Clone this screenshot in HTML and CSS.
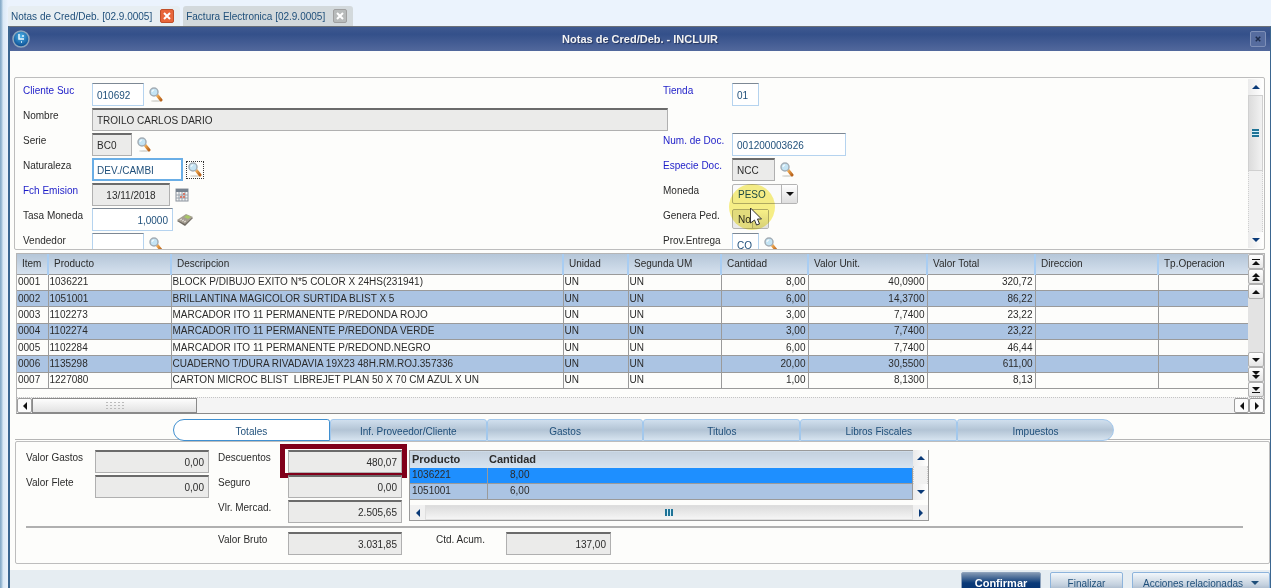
FILE: index.html
```html
<!DOCTYPE html>
<html lang="es">
<head>
    <meta charset="UTF-8">
    <meta name="viewport" content="width=device-width, initial-scale=1.0">
    <title>Notas de Cred/Deb.</title>
    <link rel="stylesheet" href="styles.css">
</head>
<body>
    <svg class="symbols" aria-hidden="true">
        <defs>
            <linearGradient id="handle" x1="0" y1="0" x2="1" y2="1">
                <stop offset="0" stop-color="#f6b25a"/>
                <stop offset="1" stop-color="#b9641c"/>
            </linearGradient>
            <radialGradient id="ball" cx="50%" cy="35%" r="60%">
                <stop offset="0" stop-color="#4fb4ea"/>
                <stop offset="1" stop-color="#0b4f94"/>
            </radialGradient>
        </defs>
        <symbol id="icon-search" viewBox="0 0 14 16">
            <ellipse cx="7" cy="14" rx="5" ry="1" fill="#dcdcd8"/>
            <path d="M8 8l4 5" stroke="url(#handle)" stroke-width="3" stroke-linecap="round"/>
            <circle cx="5" cy="5" r="4" fill="#c4e4f4" stroke="#a3adb5" stroke-width="1.5"/>
            <path d="M3 5a2 2 0 0 1 2-2" stroke="#fff" fill="none"/>
        </symbol>
        <symbol id="icon-up" viewBox="0 0 8 8"><path d="M4 2l4 4H0z"/></symbol>
        <symbol id="icon-down" viewBox="0 0 8 8"><path d="M4 6l4-4H0z"/></symbol>
        <symbol id="icon-left" viewBox="0 0 8 8"><path d="M2 4l4-4v8z"/></symbol>
        <symbol id="icon-right" viewBox="0 0 8 8"><path d="M6 4L2 0v8z"/></symbol>
        <symbol id="icon-first" viewBox="0 0 8 8"><path d="M0 1h8v1H0zM4 3l4 4H0z"/></symbol>
        <symbol id="icon-last" viewBox="0 0 8 8"><path d="M0 6h8v1H0zM4 5l4-4H0z"/></symbol>
        <symbol id="icon-pageup" viewBox="0 0 8 8"><path d="M4 0l4 4H0zM4 4l4 4H0z"/></symbol>
        <symbol id="icon-pagedown" viewBox="0 0 8 8"><path d="M4 4l4-4H0zM4 8l4-4H0z"/></symbol>
        <symbol id="icon-close" viewBox="0 0 8 8"><path d="M1 1l6 6M7 1L1 7" stroke="currentColor" stroke-width="2"/></symbol>
    </svg>

    <nav class="app-tabs">
        <div class="app-tab active">
            <a href="#">Notas de Cred/Deb. [02.9.0005]</a>
            <button class="tab-close" aria-label="Cerrar"><svg><use href="#icon-close"/></svg></button>
        </div>
        <div class="app-tab">
            <a href="#">Factura Electronica [02.9.0005]</a>
            <button class="tab-close" aria-label="Cerrar"><svg><use href="#icon-close"/></svg></button>
        </div>
    </nav>

    <main class="window">
        <header class="titlebar">
            <svg class="logo" viewBox="0 0 18 18">
                <circle cx="9" cy="9" r="8" fill="url(#ball)" stroke="#8fa6bd" stroke-width="1.5"/>
                <path d="M7 4v5h5M10 6h2M9 12h1" stroke="#e8f6ff" stroke-width="1.5" fill="none"/>
            </svg>
            <h1>Notas de Cred/Deb. - INCLUIR</h1>
            <button class="win-close" aria-label="Cerrar"><svg><use href="#icon-close"/></svg></button>
        </header>

        <section class="form-panel">
            <form class="form-grid">
                <div class="field">
                    <label class="required" for="cliente">Cliente Suc</label>
                    <input class="w52" id="cliente" value="010692">
                    <button type="button" class="lookup" aria-label="Buscar"><svg><use href="#icon-search"/></svg></button>
                </div>
                <div class="field">
                    <label class="required" for="tienda">Tienda</label>
                    <input class="w27" id="tienda" value="01">
                </div>
                <div class="field wide">
                    <label for="nombre">Nombre</label>
                    <input class="w576" id="nombre" value="TROILO CARLOS DARIO" readonly>
                </div>
                <div class="field">
                    <label for="serie">Serie</label>
                    <input class="w40" id="serie" value="BC0" readonly>
                    <button type="button" class="lookup" aria-label="Buscar"><svg><use href="#icon-search"/></svg></button>
                </div>
                <div class="field">
                    <label class="required" for="numdoc">Num. de Doc.</label>
                    <input class="w114" id="numdoc" value="001200003626">
                </div>
                <div class="field">
                    <label for="naturaleza">Naturaleza</label>
                    <input class="w91 current" id="naturaleza" value="DEV./CAMBI">
                    <button type="button" class="lookup focused" aria-label="Buscar"><svg><use href="#icon-search"/></svg></button>
                </div>
                <div class="field">
                    <label class="required" for="especie">Especie Doc.</label>
                    <input class="w43" id="especie" value="NCC" readonly>
                    <button type="button" class="lookup" aria-label="Buscar"><svg><use href="#icon-search"/></svg></button>
                </div>
                <div class="field">
                    <label class="required" for="emision">Fch Emision</label>
                    <input class="w78 center" id="emision" value="13/11/2018" readonly>
                    <button type="button" class="lookup" aria-label="Calendario">
                        <svg viewBox="0 0 14 14">
                            <rect x="1" y="1" width="12" height="12" fill="#f4f4f4" stroke="#8a929c"/>
                            <rect x="1" y="1" width="12" height="3" fill="#76828f"/>
                            <path d="M4 4v9M7 4v9M10 4v9M1 7h12M1 10h12" stroke="#98a2ac"/>
                            <path d="M5 8h2v2H5zM8 5h2v2H8zM8 8h2v2H8z" fill="#d5796a"/>
                        </svg>
                    </button>
                </div>
                <div class="field">
                    <label for="moneda">Moneda</label>
                    <span class="select-box w66">
                        <select id="moneda"><option>PESO</option></select>
                        <span class="arrow"><svg><use href="#icon-down"/></svg></span>
                    </span>
                </div>
                <div class="field">
                    <label for="tasa">Tasa Moneda</label>
                    <input class="w81 number" id="tasa" value="1,0000">
                    <button type="button" class="lookup" aria-label="Calculadora">
                        <svg class="calc" viewBox="0 0 18 14">
                            <path d="M1 8l9-6 7 3-8 8z" fill="#6f6a62"/>
                            <path d="M1 7l9-6 7 3-8 7z" fill="#a59e92"/>
                            <path d="M8 4l3-2 4 2-3 2z" fill="#a8c765"/>
                            <path d="M4 7l2-1M6 8l2-1M8 9l2-1" stroke="#e6e2da"/>
                        </svg>
                    </button>
                </div>
                <div class="field">
                    <label for="genera">Genera Ped.</label>
                    <span class="select-box locked w37">
                        <select id="genera"><option>No</option></select>
                        <span class="arrow"></span>
                    </span>
                </div>
                <div class="field">
                    <label for="vendedor">Vendedor</label>
                    <input class="w52" id="vendedor">
                    <button type="button" class="lookup" aria-label="Buscar"><svg><use href="#icon-search"/></svg></button>
                </div>
                <div class="field">
                    <label for="entrega">Prov.Entrega</label>
                    <input class="w27" id="entrega" value="CO">
                    <button type="button" class="lookup" aria-label="Buscar"><svg><use href="#icon-search"/></svg></button>
                    <span class="pointer">
                        <svg viewBox="0 0 12 20"><path d="M1 1v15l4-3 2 5 3-1-2-5h4z" fill="#fff" stroke="#333"/></svg>
                    </span>
                </div>
            </form>
            <div class="vscroll">
                <button aria-label="Subir"><svg><use href="#icon-up"/></svg></button>
                <div class="thumb"><i></i></div>
                <div class="track"></div>
                <button aria-label="Bajar"><svg><use href="#icon-down"/></svg></button>
            </div>
        </section>

        <section class="items">
            <div class="items-main">
                <table class="items-table">
                    <colgroup>
                        <col class="c-item"><col class="c-prod"><col class="c-desc"><col class="c-unit"><col class="c-seg">
                        <col class="c-cant"><col class="c-vunit"><col class="c-total"><col class="c-dir"><col>
                    </colgroup>
                    <thead>
                        <tr><th>Item</th><th>Producto</th><th>Descripcion</th><th>Unidad</th><th>Segunda UM</th><th>Cantidad</th><th>Valor Unit.</th><th>Valor Total</th><th>Direccion</th><th>Tp.Operacion</th></tr>
                    </thead>
                    <tbody>
                        <tr><td>0001</td><td>1036221</td><td>BLOCK P/DIBUJO EXITO N*5 COLOR X 24HS(231941)</td><td>UN</td><td>UN</td><td class="num">8,00</td><td class="num">40,0900</td><td class="num">320,72</td><td></td><td></td></tr>
                        <tr><td>0002</td><td>1051001</td><td>BRILLANTINA MAGICOLOR SURTIDA BLIST X 5</td><td>UN</td><td>UN</td><td class="num">6,00</td><td class="num">14,3700</td><td class="num">86,22</td><td></td><td></td></tr>
                        <tr><td>0003</td><td>1102273</td><td>MARCADOR ITO 11 PERMANENTE P/REDONDA ROJO</td><td>UN</td><td>UN</td><td class="num">3,00</td><td class="num">7,7400</td><td class="num">23,22</td><td></td><td></td></tr>
                        <tr><td>0004</td><td>1102274</td><td>MARCADOR ITO 11 PERMANENTE P/REDONDA VERDE</td><td>UN</td><td>UN</td><td class="num">3,00</td><td class="num">7,7400</td><td class="num">23,22</td><td></td><td></td></tr>
                        <tr><td>0005</td><td>1102284</td><td>MARCADOR ITO 11 PERMANENTE P/REDOND.NEGRO</td><td>UN</td><td>UN</td><td class="num">6,00</td><td class="num">7,7400</td><td class="num">46,44</td><td></td><td></td></tr>
                        <tr><td>0006</td><td>1135298</td><td>CUADERNO T/DURA RIVADAVIA 19X23 48H.RM.ROJ.357336</td><td>UN</td><td>UN</td><td class="num">20,00</td><td class="num">30,5500</td><td class="num">611,00</td><td></td><td></td></tr>
                        <tr><td>0007</td><td>1227080</td><td>CARTON MICROC BLIST&nbsp; LIBREJET PLAN 50 X 70 CM AZUL X UN</td><td>UN</td><td>UN</td><td class="num">1,00</td><td class="num">8,1300</td><td class="num">8,13</td><td></td><td></td></tr>
                    </tbody>
                </table>
                <div class="row-nav">
                    <button aria-label="Primero"><svg><use href="#icon-first"/></svg></button>
                    <button aria-label="Pagina anterior"><svg><use href="#icon-pageup"/></svg></button>
                    <button aria-label="Anterior"><svg><use href="#icon-up"/></svg></button>
                    <span class="space"></span>
                    <button aria-label="Siguiente"><svg><use href="#icon-down"/></svg></button>
                    <button aria-label="Pagina siguiente"><svg><use href="#icon-pagedown"/></svg></button>
                    <button aria-label="Ultimo"><svg><use href="#icon-last"/></svg></button>
                </div>
            </div>
            <div class="items-hscroll">
                <button aria-label="Izquierda"><svg><use href="#icon-left"/></svg></button>
                <div class="grip"><i></i></div>
                <span class="space"></span>
                <button aria-label="Izquierda"><svg><use href="#icon-left"/></svg></button>
                <button aria-label="Derecha"><svg><use href="#icon-right"/></svg></button>
            </div>
        </section>

        <nav class="section-tabs">
            <button class="active">Totales</button>
            <button>Inf. Proveedor/Cliente</button>
            <button>Gastos</button>
            <button>Titulos</button>
            <button>Libros Fiscales</button>
            <button>Impuestos</button>
        </nav>

        <section class="totals">
            <div class="totals-top">
                <div class="totals-col first">
                    <div class="field"><label for="gastos">Valor Gastos</label><input class="w114 number" id="gastos" value="0,00" readonly></div>
                    <div class="field"><label for="flete">Valor Flete</label><input class="w114 number" id="flete" value="0,00" readonly></div>
                </div>
                <div class="totals-col second">
                    <div class="field marked"><label for="descuentos">Descuentos</label><input class="w114 number" id="descuentos" value="480,07" readonly></div>
                    <div class="field"><label for="seguro">Seguro</label><input class="w114 number" id="seguro" value="0,00" readonly></div>
                    <div class="field"><label for="mercad">Vlr. Mercad.</label><input class="w114 number" id="mercad" value="2.505,65" readonly></div>
                </div>
                <div class="mini-grid">
                    <div class="mini-main">
                        <table class="mini-table">
                            <colgroup><col class="c-mini"><col></colgroup>
                            <thead><tr><th>Producto</th><th>Cantidad</th></tr></thead>
                            <tbody>
                                <tr class="selected"><td>1036221</td><td><span class="qty">8,00</span></td></tr>
                                <tr><td>1051001</td><td><span class="qty">6,00</span></td></tr>
                            </tbody>
                        </table>
                        <div class="vscroll">
                            <button aria-label="Subir"><svg><use href="#icon-up"/></svg></button>
                            <div class="track"></div>
                            <button aria-label="Bajar"><svg><use href="#icon-down"/></svg></button>
                        </div>
                    </div>
                    <div class="hscroll">
                        <button aria-label="Izquierda"><svg><use href="#icon-left"/></svg></button>
                        <div class="thumb"><i></i></div>
                        <button aria-label="Derecha"><svg><use href="#icon-right"/></svg></button>
                    </div>
                </div>
            </div>
            <div class="totals-bottom">
                <div class="field"><label for="bruto">Valor Bruto</label><input class="w114 number" id="bruto" value="3.031,85" readonly></div>
                <div class="field"><label for="acum">Ctd. Acum.</label><input class="w105 number" id="acum" value="137,00" readonly></div>
            </div>
        </section>

        <footer class="actions">
            <button class="primary">Confirmar</button>
            <button>Finalizar</button>
            <button class="related">Acciones relacionadas <svg><use href="#icon-down"/></svg></button>
        </footer>
    </main>
</body>
</html>
```

FILE: styles.css
```css
:root {
    --text: #2b2b2b;
    --link: #1f4f7a;
    --required: #1c1cc8;
    --row-blue: #abc4e3;
    --line: #9a9a9a;
    --paper: #fdfdfb;
    --navy: #0a3a78;
}

*, *::before, *::after {
    box-sizing: border-box;
}

body {
    margin: 0;
    padding: 6px 0 0 8px;
    height: 100vh;
    overflow: hidden;
    font-family: "Liberation Sans", Arial, sans-serif;
    font-size: 10px;
    color: var(--text);
    background: linear-gradient(to right, #7fa6c5 0, #a9c5dc 2px, #d9e8f5 3px, #ebf3fd 8px);
}

button, input, select {
    font: inherit;
    color: inherit;
    margin: 0;
    padding: 0;
    border-radius: 0;
}

button {
    display: flex;
    align-items: center;
    justify-content: center;
    border: none;
    background: none;
}

svg {
    width: 8px;
    height: 8px;
    flex: none;
    fill: currentColor;
}

.symbols {
    position: absolute;
    width: 0;
    height: 0;
}

.space {
    flex: 1;
}

/* application tabs */
.app-tabs {
    display: flex;
    gap: 3px;
    height: 20px;
}

.app-tab {
    display: flex;
    align-items: center;
    gap: 8px;
    padding: 0 6px 0 3px;
    background: #d3d9dc;
    border-radius: 3px 3px 0 0;
}

.app-tab.active {
    background: #e7eef2;
}

.app-tab a {
    color: var(--link);
    text-decoration: none;
}

.tab-close {
    width: 14px;
    height: 14px;
    border: 1px solid #a0a0a0;
    border-radius: 2px;
    background: #b8bbbb;
    color: #fff;
}

.active .tab-close {
    background: #e8663a;
    border-color: #c04f2a;
}

/* window */
.window {
    display: flex;
    flex-direction: column;
    background: var(--paper);
    border: 1px solid #3b6690;
    border-top-color: #6b7078;
    border-left-width: 2px;
}

.titlebar {
    display: flex;
    align-items: center;
    justify-content: space-between;
    height: 24px;
    padding: 0 4px 0 2px;
    background: linear-gradient(#3f5990, #34508a 30%, #52689c);
}

.titlebar h1 {
    margin: 0;
    font-size: 11px;
    color: #f4f4f4;
    text-shadow: 1px 1px 1px #22335c;
}

.logo {
    width: 18px;
    height: 18px;
}

.win-close {
    width: 16px;
    height: 16px;
    border: 1px solid #7f90b8;
    border-radius: 2px;
    background: #566c9f;
    color: #1e2c4c;
}

.win-close svg {
    width: 6px;
    height: 6px;
}

/* form */
.form-panel {
    display: flex;
    height: 173px;
    margin: 26px 5px 0 4px;
    padding: 1px;
    border: 1px solid #bdbdbd;
    border-radius: 2px;
    overflow: hidden;
}

.form-grid {
    flex: 1;
    display: grid;
    grid-template-columns: 639fr 584fr;
    grid-auto-rows: 25px;
    padding: 4px 0 0 7px;
}

.field {
    display: flex;
    align-items: flex-start;
    position: relative;
}

.field.wide {
    grid-column: span 2;
}

.field label {
    width: 69px;
    flex: none;
    line-height: 16px;
}

.field label.required {
    color: var(--required);
}

.field input {
    height: 23px;
    padding: 2px 4px 0;
    border: 1px solid #b5d3ef;
    border-top-color: #7d8894;
    background: #fff;
    color: var(--link);
}

.field input:read-only {
    background: #ebebea;
    border-color: #b0b0b0;
    border-top: 2px solid #6b6b6b;
    padding-top: 1px;
    color: var(--text);
}

.field input.current {
    border: 2px solid #6aaee6;
    padding: 1px 3px 0;
}

.field input.number {
    text-align: right;
}

.field input.center {
    text-align: center;
}

.w27 { width: 27px; }
.w37 { width: 37px; }
.w40 { width: 40px; }
.w43 { width: 43px; }
.w52 { width: 52px; }
.w66 { width: 66px; }
.w78 { width: 78px; }
.w81 { width: 81px; }
.w91 { width: 91px; }
.w105 { width: 105px; }
.w114 { width: 114px; }
.w576 { width: 576px; }

.lookup {
    width: 18px;
    height: 18px;
    margin: 3px 0 0 3px;
}

.lookup svg {
    width: 14px;
    height: 16px;
}

.lookup .calc {
    width: 18px;
}

.lookup.focused {
    border: 1px dotted #333;
}

.select-box {
    display: flex;
    height: 20px;
    margin-top: 1px;
    border: 1px solid #b4b4b4;
    border-radius: 2px;
    background: #fafafa;
}

.select-box select {
    flex: 1;
    min-width: 0;
    appearance: none;
    border: none;
    background: none;
    padding-left: 5px;
    color: var(--link);
}

.select-box .arrow {
    display: flex;
    align-items: center;
    justify-content: center;
    width: 16px;
    border-left: 1px solid #b4b4b4;
    background: linear-gradient(#fff, #dedede);
    color: #111;
}

.select-box.locked {
    background: #e9e9e9;
}

.select-box.locked select {
    color: var(--text);
}

/* click highlight and mouse pointer over the combos */
.pointer {
    position: absolute;
    left: 66px;
    top: -49px;
    width: 46px;
    height: 46px;
    pointer-events: none;
}

.pointer::before {
    content: "";
    position: absolute;
    inset: 0;
    border-radius: 50%;
    background: #f8f088;
    mix-blend-mode: multiply;
}

.pointer svg {
    position: absolute;
    left: 20px;
    top: 23px;
    width: 13px;
    height: 20px;
}

/* scrollbars */
.vscroll {
    display: flex;
    flex-direction: column;
    width: 15px;
    background: #f1f1f1;
    color: var(--navy);
}

.vscroll button {
    height: 16px;
    background: linear-gradient(to right, #ebebeb, #fff);
}

.vscroll .thumb {
    display: flex;
    align-items: center;
    justify-content: center;
    height: 76px;
    border: 1px solid #d0d0d0;
    background: linear-gradient(to right, #dcdcdc, #f2f2f2);
}

.vscroll .thumb i {
    width: 7px;
    height: 8px;
    background: repeating-linear-gradient(#1f7396 0 2px, #d5f0fa 2px 3px);
}

.vscroll .track {
    flex: 1;
    border: 1px dotted #cfcfcf;
    border-width: 0 1px;
}

.hscroll {
    display: flex;
    height: 16px;
    background: #f1f1f1;
    color: var(--navy);
    border-bottom: 1px solid var(--line);
}

.hscroll button {
    width: 15px;
}

.hscroll .thumb {
    flex: 1;
    display: flex;
    align-items: center;
    justify-content: center;
    border: 1px solid #dedede;
    background: linear-gradient(#dcdcdc, #f5f5f5);
}

.hscroll .thumb i {
    width: 8px;
    height: 7px;
    background: repeating-linear-gradient(to right, #1f7396 0 2px, #d5f0fa 2px 3px);
}

/* items table */
.items {
    margin: 3px 5px 0 6px;
    border: 1px solid #b5b5b5;
    border-bottom-color: #8a8a8a;
}

.items-main {
    display: flex;
    height: 143px;
    align-items: flex-start;
}

table {
    border-collapse: collapse;
    table-layout: fixed;
}

.items-table {
    flex: 1;
    width: 0;
    height: 135px;
}

.c-item { width: 31px; }
.c-prod { width: 123px; }
.c-desc { width: 392px; }
.c-unit { width: 65px; }
.c-seg { width: 93px; }
.c-cant { width: 87px; }
.c-vunit { width: 119px; }
.c-total { width: 108px; }
.c-dir { width: 123px; }
.c-mini { width: 77px; }

th, td {
    padding: 0 2px;
    text-align: left;
    white-space: nowrap;
    overflow: hidden;
    line-height: 14px;
}

.items-table th {
    height: 20px;
    padding: 0 5px;
    font-weight: normal;
    background: linear-gradient(#b5c6d8, #d5e1ee);
    border-right: 2px solid #a9cdf2;
}

.items-table th:last-child {
    border-right: none;
}

.items-table td {
    padding: 0 2px 0 1px;
    background: var(--paper);
    border: 1px solid var(--line);
    border-left: none;
}

.items-table td:last-child {
    border-right: none;
}

.items-table tr:nth-child(even) td {
    background: var(--row-blue);
}

td.num {
    text-align: right;
}

.row-nav {
    display: flex;
    flex-direction: column;
    width: 16px;
    height: 143px;
    background: #e3e3e3;
}

.row-nav button {
    height: 15px;
    border: 1px solid #b0b0b0;
    border-radius: 2px;
    background: linear-gradient(#fff, #e6e6e6);
    color: #111;
}

.items-hscroll {
    display: flex;
    height: 16px;
    background: #f4f4f4;
    border-top: 1px dotted #c4c4c4;
}

.items-hscroll button {
    width: 15px;
    border: 1px solid #9c9c9c;
    border-radius: 2px;
    background: #fbfbfb;
    color: #111;
}

.grip {
    display: flex;
    align-items: center;
    justify-content: center;
    width: 165px;
    border: 1px solid #8a8a8a;
    background: linear-gradient(#fdfdfd, #e2e2e2);
}

.grip i {
    width: 19px;
    height: 9px;
    background: radial-gradient(circle, #bbb 1px, transparent 1px) 0 0 / 4px 3px;
}

/* section tabs */
.section-tabs {
    display: flex;
    margin-top: 5px;
    margin-left: 5px;
    padding: 0 156px 0 158px;
    background: linear-gradient(transparent 20px, #b5b5b5 20px, #b5b5b5 21px, transparent 21px);
}

.section-tabs button {
    flex: 1;
    height: 22px;
    padding-top: 2px;
    border: 1px solid #a3c8ec;
    border-radius: 3px 3px 0 0;
    background: linear-gradient(#d0dfee, #b3c4d5 50%, #d6e3ef);
    color: var(--link);
}

.section-tabs button.active {
    border: 1px solid #3f8fd0;
    border-radius: 12px 3px 0 12px;
    background: #fff;
}

.section-tabs button:last-child {
    border-radius: 3px 12px 12px 0;
}

/* totals */
.totals {
    margin: 0 0 6px 5px;
    padding: 8px 0 7px 10px;
    border: 1px solid #bdbdbd;
    border-radius: 2px;
}

.totals-top {
    display: flex;
    padding-bottom: 1px;
    margin-right: 26px;
    border-bottom: 2px solid #b0b0b0;
}

.totals-col .field {
    height: 25px;
}

.totals-col.first {
    width: 192px;
}

.totals-col.second {
    width: 191px;
}

.totals-col.second label {
    width: 70px;
}

.field.marked::after {
    content: "";
    position: absolute;
    left: 62px;
    top: -6px;
    width: 127px;
    height: 34px;
    border: 5px solid #80001a;
}

.mini-grid {
    width: 520px;
    height: 71px;
    display: flex;
    flex-direction: column;
    justify-content: space-between;
    border-left: 1px solid var(--line);
    border-right: 1px solid var(--line);
}

.mini-main {
    display: flex;
    height: 50px;
}

.mini-table {
    flex: 1;
    width: 0;
    height: 50px;
}

.mini-table th {
    height: 17px;
    background: linear-gradient(#c3d0de, #d8e4f0);
    border-top: 1px solid var(--line);
    font-size: 11px;
}

.mini-table td {
    background: var(--row-blue);
    border-bottom: 1px solid var(--line);
    border-right: 1px solid var(--line);
}

.mini-table .selected td {
    background: #1e8fff;
}

.qty {
    display: inline-block;
    width: 40px;
    text-align: right;
}

.totals-bottom {
    display: flex;
    gap: 34px;
    padding: 4px 0 1px 192px;
}

.totals-bottom label {
    width: 70px;
}

/* bottom buttons */
.actions {
    display: flex;
    justify-content: flex-end;
    gap: 9px;
    padding: 2px 0 10px;
    background: #e6edf2;
}

.actions button {
    width: 73px;
    height: 22px;
    border: 1px solid #8db4dc;
    border-radius: 2px;
    background: linear-gradient(#f2f7fb, #c3d0de 60%, #8fa3b9);
    color: var(--link);
}

.actions button.primary {
    width: 80px;
    font-size: 11px;
    font-weight: bold;
    color: #fff;
    border-color: #8ea3bd;
    background: linear-gradient(#8197b3, #0a3a78 50%, #063272);
}

.actions button.related {
    width: 138px;
    gap: 8px;
}
```
